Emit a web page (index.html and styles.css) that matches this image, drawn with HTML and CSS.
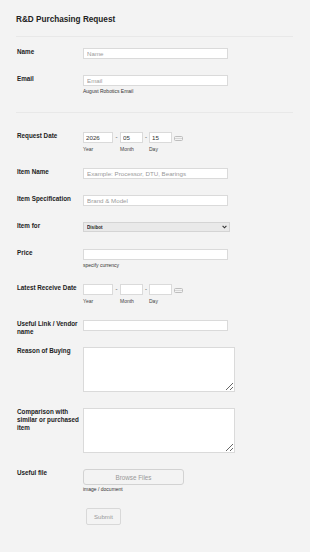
FILE: index.html
```html
<!DOCTYPE html>
<html lang="en">
<head>
  <meta charset="UTF-8">
  <title>R&amp;D Purchasing Request</title>
  <link rel="stylesheet" href="styles.css">
</head>
<body>
  <form class="form">
    <div class="form-head">
      <h1>R&amp;D Purchasing Request</h1>
    </div>

    <div class="section">
      <div class="row">
        <label class="row-label">Name</label>
        <div class="field"><input class="text" type="text" placeholder="Name"></div>
      </div>
      <div class="row">
        <label class="row-label">Email</label>
        <div class="field">
          <input class="text" type="text" placeholder="Email">
          <div class="hint">August Robotics Email</div>
        </div>
      </div>
    </div>

    <div class="section last">
      <div class="row">
        <label class="row-label">Request Date</label>
        <div class="field date">
          <div class="date-part"><input class="text year" type="text" value="2026"><span class="sub">Year</span></div>
          <span class="date-sep">-</span>
          <div class="date-part"><input class="text short" type="text" value="05"><span class="sub">Month</span></div>
          <span class="date-sep">-</span>
          <div class="date-part"><input class="text short" type="text" value="15"><span class="sub">Day</span></div>
          <svg class="cal" width="9" height="5" viewBox="0 0 9 5"><rect x="0.5" y="0.5" width="8" height="4" rx="1" fill="none" stroke="#bdbdbd"/><line x1="1" y1="2.5" x2="8" y2="2.5" stroke="#d6d6d6"/></svg>
        </div>
      </div>
      <div class="row">
        <label class="row-label">Item Name</label>
        <div class="field"><input class="text" type="text" placeholder="Example: Processor, DTU, Bearings"></div>
      </div>
      <div class="row">
        <label class="row-label">Item Specification</label>
        <div class="field"><input class="text" type="text" placeholder="Brand &amp; Model"></div>
      </div>
      <div class="row">
        <label class="row-label">Item for</label>
        <div class="field">
          <div class="select-wrap">
            <select class="select"><option>Disibot</option></select>
            <svg class="chev" width="5" height="4" viewBox="0 0 5 4"><path d="M0.6 0.8 L2.5 2.8 L4.4 0.8" fill="none" stroke="#333" stroke-width="1.1"/></svg>
          </div>
        </div>
      </div>
      <div class="row">
        <label class="row-label">Price</label>
        <div class="field">
          <input class="text" type="text">
          <div class="hint">specify currency</div>
        </div>
      </div>
      <div class="row">
        <label class="row-label">Latest Receive Date</label>
        <div class="field date">
          <div class="date-part"><input class="text year" type="text"><span class="sub">Year</span></div>
          <span class="date-sep">-</span>
          <div class="date-part"><input class="text short" type="text"><span class="sub">Month</span></div>
          <span class="date-sep">-</span>
          <div class="date-part"><input class="text short" type="text"><span class="sub">Day</span></div>
          <svg class="cal" width="9" height="5" viewBox="0 0 9 5"><rect x="0.5" y="0.5" width="8" height="4" rx="1" fill="none" stroke="#bdbdbd"/><line x1="1" y1="2.5" x2="8" y2="2.5" stroke="#d6d6d6"/></svg>
        </div>
      </div>
      <div class="row">
        <label class="row-label">Useful Link / Vendor name</label>
        <div class="field"><input class="text" type="text"></div>
      </div>
      <div class="row">
        <label class="row-label">Reason of Buying</label>
        <div class="field"><textarea class="area"></textarea></div>
      </div>
      <div class="row">
        <label class="row-label">Comparison with similar or purchased item</label>
        <div class="field"><textarea class="area"></textarea></div>
      </div>
      <div class="row">
        <label class="row-label">Useful file</label>
        <div class="field">
          <button class="browse" type="button">Browse Files</button>
          <div class="hint">image / document</div>
        </div>
      </div>
      <div class="row submit-row">
        <span class="row-label"></span>
        <div class="field"><button class="submit" type="button">Submit</button></div>
      </div>
    </div>
  </form>
</body>
</html>
```

FILE: styles.css
```css
html, body {
  margin: 0;
  padding: 0;
  background: #f3f3f3;
}

body {
  font-family: "Liberation Sans", Arial, sans-serif;
  color: #222;
}

.form {
  padding: 0 17px 0 16px;
}

.form-head {
  padding: 15px 0 11px;
  border-bottom: 1px solid #e8e8e8;
}

.form-head h1 {
  margin: 0;
  font-size: 8.2px;
  line-height: 10px;
  font-weight: bold;
}

.section {
  padding: 11px 0 2px 1px;
  border-bottom: 1px solid #e8e8e8;
}

.section.last {
  padding-top: 19px;
  border-bottom: none;
}

.row {
  display: flex;
  align-items: flex-start;
  margin-bottom: 16px;
}

.row-label {
  flex: 0 0 64px;
  width: 64px;
  height: 11px;
  margin-right: 2px;
  font-size: 6.3px;
  line-height: 8px;
  font-weight: bold;
  color: #222;
}

.field {
  display: flex;
  flex-direction: column;
  align-items: flex-start;
}

.text {
  box-sizing: border-box;
  width: 145px;
  height: 11px;
  margin: 0;
  padding: 0 3px;
  border: 1px solid #dadada;
  background: #fff;
  font-family: "Liberation Sans", Arial, sans-serif;
  font-size: 6.2px;
  color: #333;
  outline: none;
}

.text::placeholder {
  color: #9a9a9a;
}

.hint {
  margin-top: 2px;
  font-size: 5px;
  line-height: 6px;
  color: #333;
}

.date {
  flex-direction: row;
}

.date-part {
  display: flex;
  flex-direction: column;
}

.text.year {
  width: 30px;
  padding: 0 2px;
}

.text.short {
  width: 23px;
  padding: 0 2px;
}

.sub {
  margin-top: 3px;
  font-size: 5px;
  line-height: 6px;
  color: #444;
}

.date-sep {
  width: 7px;
  text-align: center;
  font-size: 6px;
  line-height: 11px;
  color: #333;
}

.date-sep + .date-part + .date-sep {
  width: 6px;
}

.cal {
  margin: 4px 0 0 2px;
}

.select-wrap {
  position: relative;
  display: flex;
}

.select {
  appearance: none;
  display: block;
  box-sizing: border-box;
  width: 147px;
  height: 10px;
  margin: 0;
  padding: 0 3px;
  border: 1px solid #d4d4d4;
  border-radius: 0;
  background: #e9e9e9;
  font-family: "Liberation Sans", Arial, sans-serif;
  font-size: 4.6px;
  font-weight: bold;
  color: #222;
  outline: none;
}

.chev {
  position: absolute;
  right: 3px;
  top: 3px;
}

.area {
  box-sizing: border-box;
  width: 152px;
  height: 45px;
  margin: 0;
  padding: 2px 3px;
  border: 1px solid #dadada;
  background: #fff;
  display: block;
}

.browse {
  box-sizing: border-box;
  width: 101px;
  height: 16px;
  margin: 0;
  padding: 0;
  border: 1px solid #d2d2d2;
  border-radius: 3px;
  background: #f3f3f3;
  font-family: "Liberation Sans", Arial, sans-serif;
  font-size: 6.3px;
  color: #999;
}

.browse + .hint {
  margin-top: 1px;
}

.submit-row {
  margin-top: 10px;
}

.submit {
  box-sizing: border-box;
  width: 35px;
  height: 17px;
  margin: 0 0 0 3px;
  padding: 0;
  border: 1px solid #d8d8d8;
  border-radius: 2px;
  background: #f3f3f3;
  font-family: "Liberation Sans", Arial, sans-serif;
  font-size: 6.1px;
  color: #999;
}
```
